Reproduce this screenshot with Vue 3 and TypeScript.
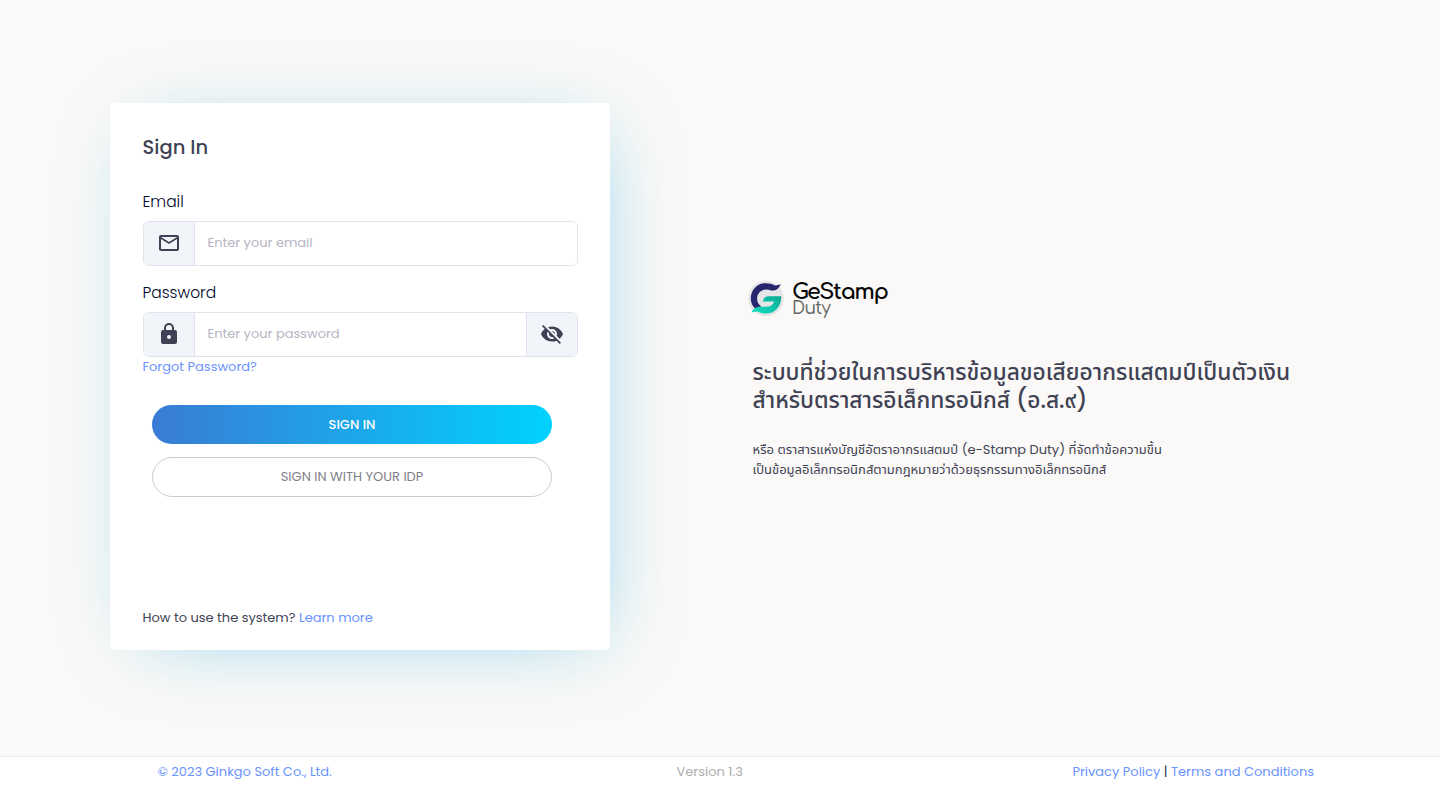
<script setup lang="ts">
import { ref } from 'vue'

const email = ref('')
const password = ref('')
const showPassword = ref(false)
</script>

<template>
  <div class="page">
    <main class="main">
      <form class="card" @submit.prevent>
        <h1 class="title">Sign In</h1>
        <label class="label" for="email">Email</label>
        <div class="group">
          <span class="addon">
            <svg viewBox="0 0 24 24" width="24" height="24"><path d="M22 6c0-1.100-.9-2-2-2H4c-1.100 0-2 .9-2 2v12c0 1.100.9 2 2 2h16c1.100 0 2-.9 2-2V6zm-2 0-8 5-8-5h16zm0 12H4V8l8 5 8-5v10z" /></svg>
          </span>
          <input id="email" v-model="email" class="input" type="text" placeholder="Enter your email" />
        </div>
        <label class="label second" for="password">Password</label>
        <div class="group">
          <span class="addon">
            <svg viewBox="0 0 24 24" width="24" height="24"><path d="M12 17a2 2 0 0 0 2-2 2 2 0 0 0-2-2 2 2 0 0 0-2 2 2 2 0 0 0 2 2m6-9a2 2 0 0 1 2 2v10a2 2 0 0 1-2 2H6a2 2 0 0 1-2-2V10a2 2 0 0 1 2-2h1V6a5 5 0 0 1 10 0v2h1m-6-5a3 3 0 0 0-3 3v2h6V6a3 3 0 0 0-3-3z" /></svg>
          </span>
          <input id="password" v-model="password" class="input" :type="showPassword ? 'text' : 'password'" placeholder="Enter your password" />
          <span class="addon end" @click="showPassword = !showPassword">
            <svg viewBox="0 0 24 24" width="24" height="24"><path d="M12 7c2.760 0 5 2.240 5 5 0 .65-.13 1.260-.36 1.830l2.920 2.920c1.510-1.260 2.700-2.890 3.430-4.750-1.730-4.390-6-7.500-11-7.500-1.400 0-2.740.25-3.980.7l2.160 2.160C10.740 7.130 11.350 7 12 7zM2 4.270l2.280 2.280.46.46C3.080 8.300 1.780 10.020 1 12c1.730 4.390 6 7.500 11 7.500 1.550 0 3.030-.3 4.380-.84l.42.42L19.730 22 21 20.730 3.270 3 2 4.270zM7.530 9.800l1.550 1.550c-.05.21-.08.43-.08.65 0 1.660 1.340 3 3 3 .22 0 .44-.03.65-.08l1.550 1.550c-.67.33-1.410.53-2.200.53-2.760 0-5-2.240-5-5 0-.79.2-1.530.53-2.200zm4.310-.78 3.150 3.150.02-.16c0-1.660-1.340-3-3-3l-.17.01z" /></svg>
          </span>
        </div>
        <a class="link forgot">Forgot Password?</a>
        <button class="btn primary" type="submit">SIGN IN</button>
        <button class="btn outline" type="button">SIGN IN WITH YOUR IDP</button>
        <p class="help">How to use the system? <a class="link">Learn more</a></p>
      </form>

      <section class="intro">
        <div class="logo">
          <svg viewBox="0 0 40 44" width="40" height="44">
            <defs>
              <linearGradient id="teal" x1="0" x2="1" y1="1" y2="0">
                <stop offset="0" stop-color="#15dfc4" />
                <stop offset="1" stop-color="#08a990" />
              </linearGradient>
            </defs>
            <circle cx="18" cy="21.500" r="17.600" fill="#e4e5e6" />
            <path d="M2.800 21.500C2.800 13 9.200 6.200 17.500 6.200c3.900 0 7 .9 9.300 2.300 2-.1 3.800-.4 6-1.500-1.400 3.800-3.800 6.100-7.300 6.600h-2.700c-1.300-.7-2.800-1.100-4.500-1.100-5.200 0-9.200 4-9.200 9.200 0 3.400 1.700 6 4.300 7.600-2.200.4-4 1.400-5.400 3C4.500 29.500 2.800 25.700 2.800 21.500z" fill="#28256f" />
            <path d="M15.500 22.300c1-1.900 2.800-3.100 5-3.100h12.700c.5 9.800-6.300 17.400-15.500 17.400-3 0-5.600-.7-7.900-2.100-2 0-4 .3-6.200 1 1.300-3.900 4.700-5.700 8.800-5.700h6.200c3.600 0 6.200-1.700 7.700-5.200H14.800z" fill="url(#teal)" />
          </svg>
          <div class="words">
            <span class="brand">GeStamp</span>
            <span class="duty">Duty</span>
          </div>
        </div>
        <h2 class="headline">
          <span class="line">ระบบที่ช่วยในการบริหารข้อมูลขอเสียอากรแสตมป์เป็นตัวเงิน</span>
          <span class="line">สำหรับตราสารอิเล็กทรอนิกส์ (อ.ส.๙)</span>
        </h2>
        <p class="desc">
          <span class="line">หรือ ตราสารแห่งบัญชีอัตราอากรแสตมป์ (e-Stamp Duty) ที่จัดทำข้อความขึ้น</span>
          <span class="line">เป็นข้อมูลอิเล็กทรอนิกส์ตามกฎหมายว่าด้วยธุรกรรมทางอิเล็กทรอนิกส์</span>
        </p>
      </section>
    </main>
    <footer class="footer">
      <a class="link copy">© 2023 Ginkgo Soft Co., Ltd.</a>
      <span class="version">Version 1.3</span>
      <span class="legal"><a class="link">Privacy Policy</a> <span class="bar">|</span> <a class="link">Terms and Conditions</a></span>
    </footer>
  </div>
</template>

<style>
body { margin: 0; overflow: hidden; }
</style>

<style scoped>
* { box-sizing: border-box; }
.page { height: 786px; display: flex; flex-direction: column; background: #faf9f7; color: #3f4254; font: 13px/20px Poppins, Inter, "Noto Sans Thai", sans-serif; }
.main { flex: 1; display: flex; align-items: flex-start; padding: 103px 0 0 110px; }
.card { width: 500px; height: 547px; flex: none; padding: 30px 32px 0 32.5px; display: flex; flex-direction: column; align-items: flex-start; background: #fff; border-radius: 5px; box-shadow: 10px 8px 75px -23px rgba(0, 155, 220, .41); }
.title { margin: 0; font-size: 19.5px; line-height: 30px; font-weight: 500; }
.label { margin-top: 27px; font-size: 15.5px; line-height: 24px; font-weight: 300; color: #000828; }
.label.second { margin-top: 15px; }
.group { display: flex; width: 435px; height: 45px; margin-top: 7px; border: 1px solid #e1e4ee; border-radius: 6px; overflow: hidden; }
.addon { width: 51px; flex: none; display: flex; align-items: center; justify-content: center; padding: 0 0 2px; background: #f1f5f9; border-right: 1px solid #e1e4ee; }
.addon.end { border-right: 0; border-left: 1px solid #e1e4ee; }
.addon svg { fill: #3f4254; }
.input { flex: 1; min-width: 0; padding: 0 12px 2px 13px; border: 0; outline: 0; font: inherit; background: #fff; }
.input::placeholder { color: #b5b5c3; opacity: 1; }
.link { color: #6993ff; text-decoration: none; }
.btn { width: 400px; height: 39px; margin-left: 9.5px; padding: 0; font: inherit; border-radius: 20px; }
.primary { margin-top: 28px; border: 0; color: #fff; font-weight: 500; background: linear-gradient(90deg, #3a7bd5, #00d2ff); }
.outline { height: 40px; margin-top: 13px; border: 1px solid #ccc; color: #7e8088; background: #fff; }
.help { margin: 111px 0 0; }
.intro { margin: 174px 0 0 138px; }
.logo { display: flex; height: 44px; }
.words { display: flex; flex-direction: column; margin: 4px 0 0 4px; font-family: Comfortaa, Lato, sans-serif; white-space: nowrap; }
.brand { font-size: 22px; line-height: 22px; font-weight: 700; letter-spacing: -1.3px; color: #050505; }
.duty { margin-top: -3px; font-size: 17px; line-height: 17px; font-weight: 500; letter-spacing: -.7px; color: #666; }
.line { display: block; white-space: nowrap; }
.headline { margin: 37px 0 0 4.5px; font-size: 22.75px; line-height: 28px; font-weight: 500; }
.desc { margin: 26px 0 0 4.5px; font-size: 13px; line-height: 20px; }
.footer { height: 30px; flex: none; display: grid; grid-template-columns: 519px 1fr auto; padding: 5px 126px 0 157.5px; border-top: 1px solid #ebedf3; background: #fff; }
.version { color: #adadad; }
.bar { color: #27304d; }
</style>
